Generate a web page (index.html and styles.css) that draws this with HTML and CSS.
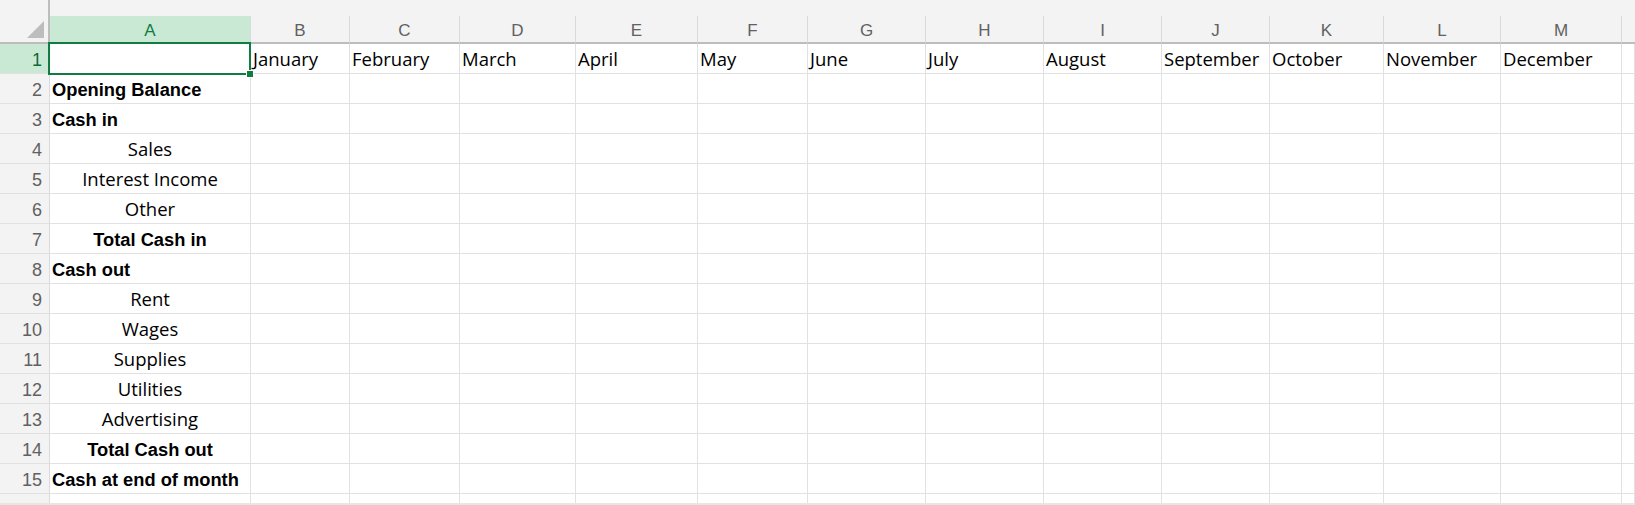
FILE: index.html
```html
<!DOCTYPE html>
<html lang="en">
<head>
<meta charset="utf-8">
<title>Cash flow</title>
<link rel="stylesheet" href="styles.css">
</head>
<body>
<div class="sheet">
  <div class="topbar"><div></div><div class="split"></div><div></div></div>
  <div class="row hdr">
    <div class="h corner"><span class="tri"></span></div>
    <div class="h sel">A</div><div class="h">B</div><div class="h">C</div><div class="h">D</div><div class="h">E</div><div class="h">F</div><div class="h">G</div><div class="h">H</div><div class="h">I</div><div class="h">J</div><div class="h">K</div><div class="h">L</div><div class="h">M</div><div class="h last"></div>
  </div>
  <div class="row">
    <div class="rh sel">1</div>
    <div class="c"></div><div class="c">January</div><div class="c">February</div><div class="c">March</div><div class="c">April</div><div class="c">May</div><div class="c">June</div><div class="c">July</div><div class="c">August</div><div class="c">September</div><div class="c">October</div><div class="c">November</div><div class="c">December</div><div class="c"></div>
  </div>
  <div class="row">
    <div class="rh">2</div>
    <div class="c b">Opening Balance</div><div class="c"></div><div class="c"></div><div class="c"></div><div class="c"></div><div class="c"></div><div class="c"></div><div class="c"></div><div class="c"></div><div class="c"></div><div class="c"></div><div class="c"></div><div class="c"></div><div class="c"></div>
  </div>
  <div class="row">
    <div class="rh">3</div>
    <div class="c b">Cash in</div><div class="c"></div><div class="c"></div><div class="c"></div><div class="c"></div><div class="c"></div><div class="c"></div><div class="c"></div><div class="c"></div><div class="c"></div><div class="c"></div><div class="c"></div><div class="c"></div><div class="c"></div>
  </div>
  <div class="row">
    <div class="rh">4</div>
    <div class="c ctr">Sales</div><div class="c"></div><div class="c"></div><div class="c"></div><div class="c"></div><div class="c"></div><div class="c"></div><div class="c"></div><div class="c"></div><div class="c"></div><div class="c"></div><div class="c"></div><div class="c"></div><div class="c"></div>
  </div>
  <div class="row">
    <div class="rh">5</div>
    <div class="c ctr">Interest Income</div><div class="c"></div><div class="c"></div><div class="c"></div><div class="c"></div><div class="c"></div><div class="c"></div><div class="c"></div><div class="c"></div><div class="c"></div><div class="c"></div><div class="c"></div><div class="c"></div><div class="c"></div>
  </div>
  <div class="row">
    <div class="rh">6</div>
    <div class="c ctr">Other</div><div class="c"></div><div class="c"></div><div class="c"></div><div class="c"></div><div class="c"></div><div class="c"></div><div class="c"></div><div class="c"></div><div class="c"></div><div class="c"></div><div class="c"></div><div class="c"></div><div class="c"></div>
  </div>
  <div class="row">
    <div class="rh">7</div>
    <div class="c ctr b">Total Cash in</div><div class="c"></div><div class="c"></div><div class="c"></div><div class="c"></div><div class="c"></div><div class="c"></div><div class="c"></div><div class="c"></div><div class="c"></div><div class="c"></div><div class="c"></div><div class="c"></div><div class="c"></div>
  </div>
  <div class="row">
    <div class="rh">8</div>
    <div class="c b">Cash out</div><div class="c"></div><div class="c"></div><div class="c"></div><div class="c"></div><div class="c"></div><div class="c"></div><div class="c"></div><div class="c"></div><div class="c"></div><div class="c"></div><div class="c"></div><div class="c"></div><div class="c"></div>
  </div>
  <div class="row">
    <div class="rh">9</div>
    <div class="c ctr">Rent</div><div class="c"></div><div class="c"></div><div class="c"></div><div class="c"></div><div class="c"></div><div class="c"></div><div class="c"></div><div class="c"></div><div class="c"></div><div class="c"></div><div class="c"></div><div class="c"></div><div class="c"></div>
  </div>
  <div class="row">
    <div class="rh">10</div>
    <div class="c ctr">Wages</div><div class="c"></div><div class="c"></div><div class="c"></div><div class="c"></div><div class="c"></div><div class="c"></div><div class="c"></div><div class="c"></div><div class="c"></div><div class="c"></div><div class="c"></div><div class="c"></div><div class="c"></div>
  </div>
  <div class="row">
    <div class="rh">11</div>
    <div class="c ctr">Supplies</div><div class="c"></div><div class="c"></div><div class="c"></div><div class="c"></div><div class="c"></div><div class="c"></div><div class="c"></div><div class="c"></div><div class="c"></div><div class="c"></div><div class="c"></div><div class="c"></div><div class="c"></div>
  </div>
  <div class="row">
    <div class="rh">12</div>
    <div class="c ctr">Utilities</div><div class="c"></div><div class="c"></div><div class="c"></div><div class="c"></div><div class="c"></div><div class="c"></div><div class="c"></div><div class="c"></div><div class="c"></div><div class="c"></div><div class="c"></div><div class="c"></div><div class="c"></div>
  </div>
  <div class="row">
    <div class="rh">13</div>
    <div class="c ctr">Advertising</div><div class="c"></div><div class="c"></div><div class="c"></div><div class="c"></div><div class="c"></div><div class="c"></div><div class="c"></div><div class="c"></div><div class="c"></div><div class="c"></div><div class="c"></div><div class="c"></div><div class="c"></div>
  </div>
  <div class="row">
    <div class="rh">14</div>
    <div class="c ctr b">Total Cash out</div><div class="c"></div><div class="c"></div><div class="c"></div><div class="c"></div><div class="c"></div><div class="c"></div><div class="c"></div><div class="c"></div><div class="c"></div><div class="c"></div><div class="c"></div><div class="c"></div><div class="c"></div>
  </div>
  <div class="row">
    <div class="rh">15</div>
    <div class="c b">Cash at end of month</div><div class="c"></div><div class="c"></div><div class="c"></div><div class="c"></div><div class="c"></div><div class="c"></div><div class="c"></div><div class="c"></div><div class="c"></div><div class="c"></div><div class="c"></div><div class="c"></div><div class="c"></div>
  </div>
  <div class="row">
    <div class="rh">16</div>
    <div class="c"></div><div class="c"></div><div class="c"></div><div class="c"></div><div class="c"></div><div class="c"></div><div class="c"></div><div class="c"></div><div class="c"></div><div class="c"></div><div class="c"></div><div class="c"></div><div class="c"></div><div class="c"></div>
  </div>
  <div class="selection"><span class="handle"></span></div>
</div>
</body>
</html>
```

FILE: styles.css
```css
html, body {
  margin: 0;
  padding: 0;
  background: #ffffff;
}

body {
  font-family: "Liberation Sans", Arial, sans-serif;
  color: #000000;
}

.sheet {
  position: relative;
  width: 1635px;
  height: 503px;
  overflow: hidden;
  border-bottom: 2px solid #e6e6e6;
  background: #ffffff;
}

.topbar {
  height: 16px;
  background: #f3f3f3;
  display: grid;
  grid-template-columns: 48px 2px 1fr;
}

.topbar .split {
  background: #bdbdbd;
}

.row {
  display: grid;
  grid-template-columns: 50px 201px 99px 110px 116px 122px 110px 118px 118px 118px 108px 114px 117px 121px 1fr;
}

.h {
  box-sizing: border-box;
  height: 28px;
  background: #f3f3f3;
  border-right: 1px solid #dadada;
  border-bottom: 2px solid #bdbdbd;
  color: #616161;
  font-size: 17px;
  display: flex;
  align-items: center;
  justify-content: center;
  padding-top: 3px;
}

.h.sel {
  background: #cae9d5;
  color: #107c41;
}

.h.last {
  border-right: none;
}

.h.corner {
  position: relative;
  border-right: 2px solid #bdbdbd;
}

.tri {
  position: absolute;
  right: 4px;
  bottom: 4px;
  width: 0;
  height: 0;
  border-left: 17px solid transparent;
  border-bottom: 17px solid #bdbdbd;
}

.rh {
  box-sizing: border-box;
  height: 30px;
  background: #f3f3f3;
  border-right: 1px solid #dadada;
  border-bottom: 1px solid #e1e1e1;
  color: #616161;
  font-size: 18px;
  line-height: 20px;
  display: flex;
  align-items: flex-end;
  justify-content: flex-end;
  padding: 0 7px 3px 0;
}

.rh.sel {
  background: #cae9d5;
  color: #0e6b38;
}

.c {
  box-sizing: border-box;
  height: 30px;
  border-right: 1px solid #e1e1e1;
  border-bottom: 1px solid #e1e1e1;
  font-family: "Open Sans", "Liberation Sans", sans-serif;
  font-size: 18.5px;
  line-height: 20px;
  padding: 0 2px 4px 2px;
  display: flex;
  align-items: flex-end;
  white-space: nowrap;
}

.c.b {
  font-family: "Liberation Sans", Arial, sans-serif;
  font-size: 18.3px;
  font-weight: bold;
  padding-bottom: 3px;
}

.c.ctr {
  justify-content: center;
}

.selection {
  position: absolute;
  left: 48px;
  top: 42px;
  width: 203px;
  height: 33px;
  box-sizing: border-box;
  border: 2px solid #107c41;
}

.handle {
  position: absolute;
  right: -4px;
  bottom: -4px;
  width: 6px;
  height: 6px;
  background: #107c41;
  box-shadow: 0 0 0 1px #ffffff;
}
```
